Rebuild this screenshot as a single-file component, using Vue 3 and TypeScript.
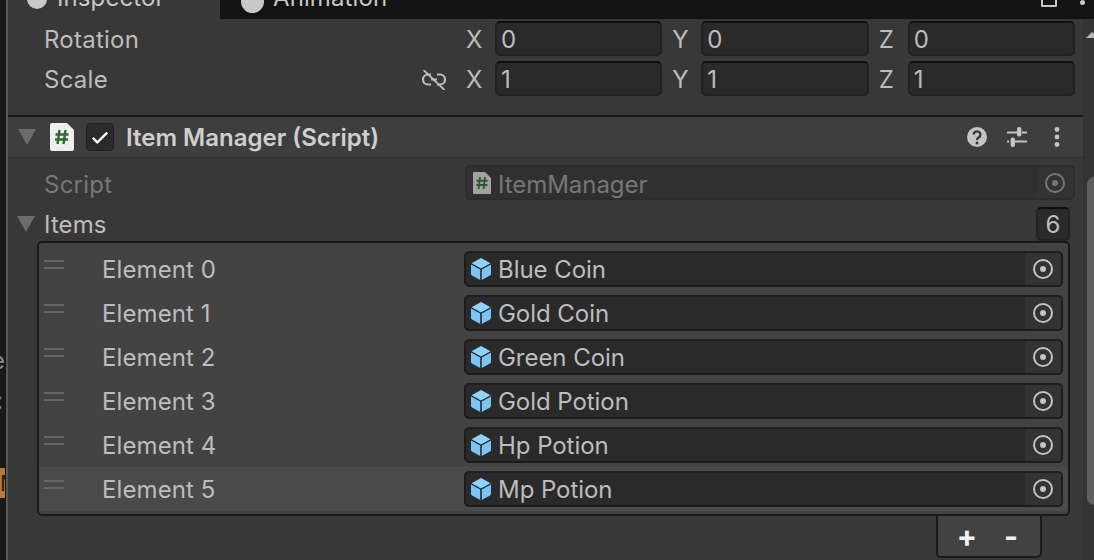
<template>
	<div class="editor">
		<div class="strip">
			<span class="strip-glyph glyph-e">e</span>
			<span class="strip-glyph glyph-s">:</span>
			<span class="strip-asset">M</span>
		</div>

		<div class="panel">
			<div class="tabs">
				<div class="tab tab-active">
					<span class="tab-dot"></span>
					<span>Inspector</span>
				</div>
				<div class="tab">
					<span class="tab-dot"></span>
					<span>Animation</span>
				</div>
				<div class="tab-tools">
					<span class="tool-box"></span>
					<span class="tool-dot"></span>
				</div>
			</div>

			<div class="body">
				<div class="content">
					<div v-for="row in transformRows" :key="row.name" class="prop">
						<div class="prop-label">
							<span>{{ row.name }}</span>
							<svg v-if="row.linked" class="link-icon" viewBox="0 0 24 20" fill="none" stroke="#bdbdbd">
								<path d="M9 4.5H6a5 5 0 0 0 0 10h3M15 4.5h3a5 5 0 0 1 0 10h-3" stroke-width="2.2" />
								<path d="M9 9.5h6" stroke-width="2" />
								<path d="M1.5 0l21 20" stroke-width="1.8" />
							</svg>
						</div>
						<div class="vector">
							<div v-for="axis in row.axes" :key="axis.key" class="axis">
								<span class="axis-key">{{ axis.key }}</span>
								<span class="field axis-field">{{ axis.value }}</span>
							</div>
						</div>
					</div>

					<div class="component-header">
						<svg class="fold" viewBox="0 0 18 16"><path d="M0 0h18L9 16z" fill="#6c6c6c" /></svg>
						<svg class="script-icon" viewBox="0 0 24 28">
							<path d="M2 0h15l7 7v19a2 2 0 0 1-2 2H2a2 2 0 0 1-2-2V2a2 2 0 0 1 2-2z" fill="#eeeeee" />
							<path d="M9.5 7l-2 14M15.5 7l-2 14M5.5 11.5h13M5 16.5h13" stroke="#2f6b2f" stroke-width="2.4" fill="none" />
						</svg>
						<span class="checkbox">
							<svg viewBox="0 0 20 16" fill="none">
								<path d="M2 8.5l5 5L18 2.5" stroke="#ffffff" stroke-width="2.6" />
							</svg>
						</span>
						<span class="component-title">Item Manager (Script)</span>
						<div class="header-tools">
							<svg viewBox="0 0 20 20">
								<circle cx="10" cy="10" r="10" fill="#c4c4c4" />
								<path d="M6.6 7.6a3.4 3.2 0 1 1 5.2 2.7c-1.2.8-1.8 1.2-1.8 2.6" fill="none" stroke="#383838" stroke-width="2.4" />
								<circle cx="10" cy="16" r="1.5" fill="#383838" />
							</svg>
							<svg viewBox="0 0 20 20">
								<path d="M0 5.5h10M15 5.5h5M0 14.5h2M8 14.5h12" stroke="#c4c4c4" stroke-width="2" fill="none" />
								<rect x="10" y="0" width="4.4" height="9.5" rx="2" fill="#c4c4c4" />
								<rect x="3.6" y="10.5" width="4.4" height="9.5" rx="2" fill="#c4c4c4" />
							</svg>
							<svg viewBox="0 0 20 20">
								<circle cx="10" cy="2.5" r="2.4" fill="#c4c4c4" />
								<circle cx="10" cy="10" r="2.4" fill="#c4c4c4" />
								<circle cx="10" cy="17.5" r="2.4" fill="#c4c4c4" />
							</svg>
						</div>
					</div>

					<div class="prop script-row">
						<div class="prop-label muted">Script</div>
						<div class="field object-field disabled">
							<svg class="mini-script" viewBox="0 0 18 22">
								<path d="M1 0h11l6 6v15a1 1 0 0 1-1 1H1a1 1 0 0 1-1-1V1a1 1 0 0 1 1-1z" fill="#a2a2a2" />
								<path d="M7 5l-1.4 12M12 5l-1.4 12M3.6 8.8h11M3.4 13h11" stroke="#2f5a2f" stroke-width="1.9" fill="none" />
							</svg>
							<span class="object-name">ItemManager</span>
							<span class="picker">
								<svg viewBox="0 0 20 20" fill="none">
									<circle cx="10" cy="10" r="9" stroke="#777777" stroke-width="2" />
									<circle cx="10" cy="10" r="3" fill="#777777" />
								</svg>
							</span>
						</div>
					</div>

					<div class="items-row">
						<svg class="fold" viewBox="0 0 18 16"><path d="M0 0h18L9 16z" fill="#6c6c6c" /></svg>
						<span class="items-label">Items</span>
						<span class="field count">{{ items.length }}</span>
					</div>

					<div class="list">
						<div
							v-for="(item, index) in items"
							:key="item"
							class="list-row"
							:class="{ selected: index === items.length - 1 }"
						>
							<span class="handle"></span>
							<span class="element-label">Element {{ index }}</span>
							<div class="field object-field">
								<svg class="cube" viewBox="0 0 20 22">
									<path d="M10 0l9.5 5.2L10 10.4.5 5.2z" fill="#8fd1ff" />
									<path d="M0 6.6l9.2 5V22L1 17.4a2 2 0 0 1-1-1.7z" fill="#7cc4f5" />
									<path d="M20 6.6l-9.2 5V22l8.2-4.6a2 2 0 0 0 1-1.7z" fill="#7cc4f5" />
								</svg>
								<span class="object-name">{{ item }}</span>
								<span class="picker">
									<svg viewBox="0 0 20 20" fill="none">
										<circle cx="10" cy="10" r="9" stroke="#c4c4c4" stroke-width="2" />
										<circle cx="10" cy="10" r="3" fill="#c4c4c4" />
									</svg>
								</span>
							</div>
						</div>
					</div>

					<div class="list-footer">
						<span>+</span>
						<span>-</span>
					</div>
				</div>

				<div class="scrollbar">
					<span class="scroll-arrow"></span>
					<span class="scroll-thumb"></span>
				</div>
			</div>
		</div>
	</div>
</template>

<script setup lang="ts">
interface Axis {
	key: string;
	value: string;
}

interface TransformRow {
	name: string;
	linked: boolean;
	axes: Axis[];
}

const axesOf = (value: string): Axis[] =>
	["X", "Y", "Z"].map((key) => ({ key, value }));

const transformRows: TransformRow[] = [
	{ name: "Rotation", linked: false, axes: axesOf("0") },
	{ name: "Scale", linked: true, axes: axesOf("1") },
];

const items: string[] = [
	"Blue Coin",
	"Gold Coin",
	"Green Coin",
	"Gold Potion",
	"Hp Potion",
	"Mp Potion",
];
</script>

<style>
body {
	margin: 0;
	background: #383838;
}
</style>

<style scoped>
.editor {
	display: flex;
	width: 1094px;
	height: 560px;
	overflow: hidden;
	font-family: Inter, "Liberation Sans", sans-serif;
	font-size: 24px;
	letter-spacing: 0.1px;
	color: #bdbdbd;
	background: #383838;
}

.strip {
	position: relative;
	flex: 0 0 6px;
	overflow: hidden;
	background: #191919;
	border-right: 2px solid #585858;
}

.strip-glyph {
	position: absolute;
	left: -9px;
	color: #8a8a8a;
	font-size: 24px;
}

.glyph-e {
	top: 346px;
}

.glyph-s {
	top: 386px;
	left: -4px;
}

.strip-asset {
	position: absolute;
	top: 468px;
	left: 0;
	width: 5px;
	height: 30px;
	overflow: hidden;
	background: #b67a3a;
	color: #2a1d0c;
	font-size: 22px;
	line-height: 30px;
}

.panel {
	flex: 1;
	display: flex;
	flex-direction: column;
	min-width: 0;
}

.tabs {
	flex: 0 0 19px;
	display: flex;
	align-items: flex-end;
	overflow: hidden;
	background: #131313;
}

.tab {
	display: flex;
	align-items: center;
	gap: 9px;
	box-sizing: border-box;
	flex: 0 0 212px;
	height: 19px;
	padding-left: 21px;
	line-height: 29px;
	color: #c8c8c8;
}

.tab > span:last-child {
	position: relative;
	top: -12px;
}

.tab-active {
	padding-left: 19px;
	background: #383838;
}

.tab-dot {
	width: 23px;
	height: 23px;
	margin-top: -17px;
	border-radius: 50%;
	background: #c8c8c8;
	flex: none;
}

.tab-active .tab-dot {
	width: 20px;
	height: 20px;
	margin-top: -21px;
	margin-right: 1px;
}

.tab-tools {
	display: flex;
	align-items: flex-start;
	gap: 23px;
	margin-left: auto;
	height: 19px;
	padding-right: 9px;
}

.tool-box {
	width: 12px;
	height: 13px;
	margin-top: -10px;
	border: 2px solid #c8c8c8;
	border-radius: 1px;
}

.tool-dot {
	width: 5px;
	height: 5px;
	border-radius: 50%;
	background: #c8c8c8;
}

.body {
	flex: 1;
	display: flex;
	min-height: 0;
}

.content {
	flex: 0 0 1075px;
	display: flex;
	flex-direction: column;
	min-width: 0;
}

.scrollbar {
	position: relative;
	flex: 1;
	background: #343434;
	border-left: 1px solid #303030;
}

.scroll-arrow {
	position: absolute;
	top: 13px;
	left: 2px;
	width: 0;
	height: 0;
	border-left: 6px solid transparent;
	border-right: 6px solid transparent;
	border-bottom: 6px solid #b8b8b8;
}

.scroll-thumb {
	position: absolute;
	top: 158px;
	left: 3px;
	width: 14px;
	height: 328px;
	border-radius: 7px;
	background: #5f5f5f;
}

.prop {
	display: flex;
	align-items: center;
	box-sizing: border-box;
	height: 35px;
	margin: 0 8px 5px 36px;
}

.prop:first-child {
	margin-top: 2px;
}

.prop-label {
	flex: 0 0 422px;
	display: flex;
	align-items: center;
	justify-content: space-between;
	padding-top: 2px;
	box-sizing: border-box;
	letter-spacing: 0.25px;
}

.muted {
	color: #777777;
}

.link-icon {
	width: 24px;
	height: 20px;
	margin-right: 20px;
}

.vector {
	flex: 1;
	display: grid;
	grid-template-columns: repeat(3, 1fr);
	column-gap: 10px;
}

.axis {
	display: flex;
	align-items: center;
}

.axis-key {
	flex: 0 0 29px;
	padding-top: 2px;
}

.field {
	display: flex;
	align-items: center;
	box-sizing: border-box;
	height: 35px;
	background: #2a2a2a;
	border: 2px solid #222222;
	border-top-color: #0f0f0f;
	border-radius: 5px;
}

.axis-field {
	flex: 1;
	padding: 2px 0 0 4px;
}

.component-header {
	display: flex;
	align-items: center;
	box-sizing: border-box;
	height: 43px;
	margin-top: 14px;
	padding-left: 10px;
	background: #3e3e3e;
	border-top: 2px solid #191919;
	border-bottom: 1px solid #2f2f2f;
}

.fold {
	flex: none;
	width: 18px;
	height: 16px;
}

.script-icon {
	flex: none;
	width: 24px;
	height: 28px;
	margin-left: 14px;
}

.checkbox {
	flex: none;
	display: flex;
	align-items: center;
	justify-content: center;
	box-sizing: border-box;
	width: 28px;
	height: 28px;
	margin-left: 12px;
	background: #2a2a2a;
	border: 1px solid #202020;
	border-radius: 4px;
}

.checkbox svg {
	width: 18px;
	height: 15px;
}

.component-title {
	margin-left: 12px;
	font-weight: 600;
	letter-spacing: 0;
	color: #cfcfcf;
}

.header-tools {
	display: flex;
	gap: 20px;
	margin-left: auto;
	padding-right: 16px;
}

.header-tools svg {
	width: 20px;
	height: 20px;
}

.script-row {
	margin-top: 7px;
}

.script-row .prop-label {
	padding-top: 4px;
}

.script-row .object-name {
	padding-top: 4px;
}

.script-row .object-field {
	width: 610px;
	margin-left: -1px;
}

.disabled {
	background: #303030;
	border-color: #2c2c2c;
	color: #777777;
}

.object-field {
	flex: 1;
	padding-left: 6px;
}

.mini-script {
	flex: none;
	width: 18px;
	height: 22px;
	margin-right: 7px;
}

.object-name {
	flex: 1;
	padding-top: 1px;
	letter-spacing: -0.05px;
}

.picker {
	flex: none;
	display: flex;
	align-items: center;
	justify-content: center;
	width: 36px;
	height: 100%;
	background: #333333;
	border-radius: 0 3px 3px 0;
}

.disabled .picker {
	background: #333333;
}

.picker svg {
	width: 20px;
	height: 20px;
}

.items-row {
	display: flex;
	align-items: center;
	height: 35px;
	margin-top: 1px;
	padding-left: 9px;
	padding-right: 13px;
}

.items-label {
	margin-left: 9px;
	padding-top: 2px;
	flex: 1;
}

.count {
	justify-content: center;
	width: 34px;
	height: 34px;
	padding-top: 2px;
}

.list {
	box-sizing: border-box;
	height: 275px;
	margin: 0 13px 0 29px;
	padding: 4px 0;
	background: #434343;
	border: 2px solid #191919;
	border-radius: 5px;
}

.list-row {
	position: relative;
	display: flex;
	align-items: center;
	height: 44px;
	padding-right: 5px;
}

.selected {
	background: #4a4a4a;
}

.handle {
	flex: none;
	width: 20px;
	height: 5px;
	margin: -9px 0 0 5px;
	border-top: 2px solid #666666;
	border-bottom: 2px solid #666666;
}

.element-label {
	flex: 0 0 362px;
	margin-left: 38px;
	padding-top: 2px;
	line-height: 44px;
}

.list-row .object-field {
	height: 36px;
	padding-left: 5px;
	border-color: #1f1f1f #1c1c1c #1c1c1c;
}

.cube {
	flex: none;
	width: 20px;
	height: 22px;
	margin-right: 7px;
}

.list-footer {
	display: grid;
	grid-template-columns: 44px 44px;
	justify-content: center;
	justify-items: center;
	align-items: center;
	box-sizing: border-box;
	width: 106px;
	height: 42px;
	margin: 0 0 0 928px;
	background: #424242;
	border: 2px solid #191919;
	border-top: none;
	border-radius: 0 0 5px 5px;
	color: #f0f0f0;
	font-size: 30px;
	font-weight: 700;
}
</style>
